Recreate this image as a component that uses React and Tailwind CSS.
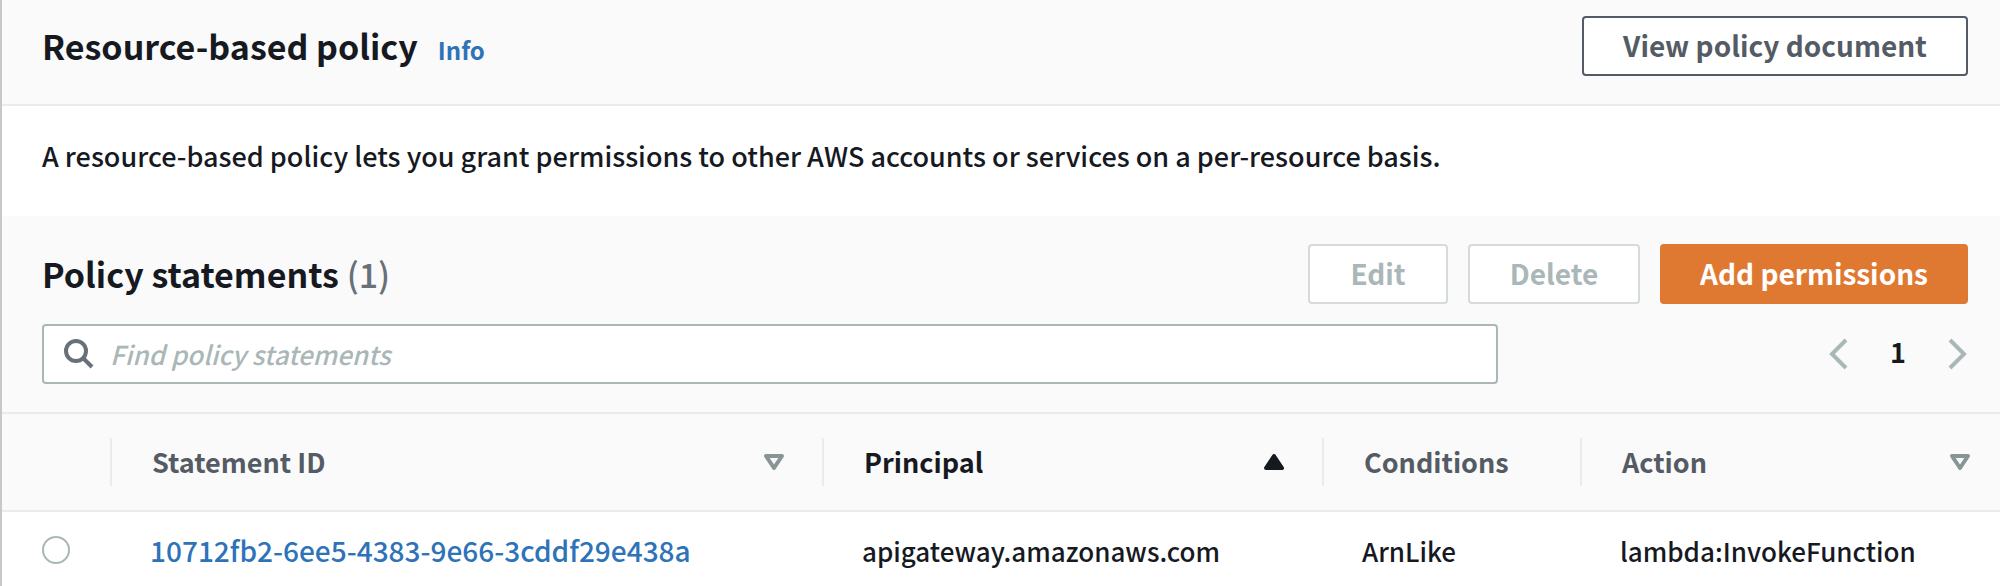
import React from 'react';

const columns = [
    { key: 'id', label: 'Statement ID', sort: 'none' },
    { key: 'principal', label: 'Principal', sort: 'asc' },
    { key: 'conditions', label: 'Conditions' },
    { key: 'action', label: 'Action', sort: 'none' },
];

const statements = [
    {
        id: '10712fb2-6ee5-4383-9e66-3cddf29e438a',
        principal: 'apigateway.amazonaws.com',
        conditions: 'ArnLike',
        action: 'lambda:InvokeFunction',
    },
];

const buttonStyles = {
    normal: 'bg-white border-[#545b64] text-[#545b64]',
    disabled: 'bg-white border-[#d5dbdb] text-[#aab7b8]',
    primary: 'bg-[#df7932] border-[#df7932] text-white',
};

const Button = ({ variant = 'normal', className = '', children }) => (
    <button
        type="button"
        disabled={variant === 'disabled'}
        className={`h-15 pb-0.5 rounded-sm border-2 text-[28px] font-bold whitespace-nowrap ${buttonStyles[variant]} ${className}`}
    >
        {children}
    </button>
);

const SearchIcon = () => (
    <svg className="w-8 h-8 shrink-0" viewBox="0 0 32 32" fill="none" stroke="#687078" strokeWidth="4">
        <circle cx="14" cy="13" r="10" />
        <path d="M21 20l9 9" />
    </svg>
);

const Chevron = ({ d }) => (
    <svg className="w-5 h-8" viewBox="0 0 20 32" fill="none" stroke="#aab7b8" strokeWidth="4">
        <path d={d} />
    </svg>
);

const SortIcon = ({ sort }) => (
    <svg className="w-6 h-5 shrink-0" viewBox="0 0 24 20" strokeLinejoin="round">
        {sort === 'asc' ? (
            <path d="M12 4L20 16H4Z" fill="#16191f" stroke="#16191f" strokeWidth="4" />
        ) : (
            <path d="M4 4H20L12 16Z" fill="none" stroke="#879596" strokeWidth="4" />
        )}
    </svg>
);

const App = () => {
    return (
        <main className="min-h-screen border-l-2 border-[#c5c9c9] bg-white text-[27px] leading-9 font-medium text-[#16191f] font-['Noto_Sans_CJK_SC','Noto_Sans',sans-serif]">
            <header className="flex items-start justify-between bg-[#fafafa] border-b-2 border-[#ebebeb] pl-10 pr-8 pt-4 pb-7">
                <div className="flex items-baseline gap-5 pt-2.5">
                    <h1 className="text-[34px] leading-10 font-bold">Resource-based policy</h1>
                    <a href="#info" className="text-2xl font-bold text-[#2e73b8]">Info</a>
                </div>
                <Button className="w-[386px]">View policy document</Button>
            </header>

            <p className="pl-10 pr-8 pt-8 pb-[42px]">
                A resource-based policy lets you grant permissions to other AWS accounts or services on a per-resource basis.
            </p>

            <section className="bg-[#fafafa] pl-10 pr-8 pt-7 pb-7">
                <div className="flex items-start justify-between">
                    <h2 className="pt-2.5 text-[34px] leading-10 font-bold">
                        Policy statements <span className="font-medium text-[#687078]">(1)</span>
                    </h2>
                    <div className="flex gap-5">
                        <Button variant="disabled" className="w-35">Edit</Button>
                        <Button variant="disabled" className="w-43">Delete</Button>
                        <Button variant="primary" className="w-77">Add permissions</Button>
                    </div>
                </div>
                <div className="flex items-center justify-between mt-5">
                    <label className="flex items-center gap-4 w-[1456px] max-w-3/4 xl:max-w-4/5 h-15 pl-4.5 pr-4 bg-white border-2 border-[#aab7b8] rounded-sm">
                        <SearchIcon />
                        <input
                            type="text"
                            aria-label="Find policy statements"
                            placeholder="Find policy statements"
                            className="flex-1 min-w-0 text-[26px] outline-none placeholder:italic placeholder:text-[#aab7b8]"
                        />
                    </label>
                    <nav className="flex items-center" aria-label="Pagination">
                        <button type="button" aria-label="Previous page" disabled>
                            <Chevron d="M18 2L4 16L18 30" />
                        </button>
                        <button type="button" className="w-25 pb-1 font-bold">1</button>
                        <button type="button" aria-label="Next page" disabled>
                            <Chevron d="M2 2L16 16L2 30" />
                        </button>
                    </nav>
                </div>
            </section>

            <table className="w-full table-fixed text-left text-[26px]">
                <colgroup>
                    <col className="w-[108px]" />
                    <col className="w-[712px]" />
                    <col className="w-[500px]" />
                    <col className="w-[258px]" />
                    <col />
                </colgroup>
                <thead>
                    <tr className="bg-[#fafafa] border-y-2 border-[#ebebeb] text-[27px]">
                        <td />
                        {columns.map((col) => (
                            <th key={col.key} className="py-6 font-bold">
                                <div className={`flex items-center justify-between h-12 pl-10 border-l-2 border-[#ebebeb] ${col.key === 'action' ? 'pr-7' : 'pr-9'} ${col.sort === 'asc' ? 'text-[#16191f]' : 'text-[#545b64]'}`}>
                                    {col.label}
                                    {col.sort && <SortIcon sort={col.sort} />}
                                </div>
                            </th>
                        ))}
                    </tr>
                </thead>
                <tbody>
                    {statements.map((row) => (
                        <tr key={row.id}>
                            <td className="pt-1 pl-10">
                                <input
                                    type="radio"
                                    name="statement"
                                    aria-label={row.id}
                                    className="block appearance-none w-7 h-7 rounded-full border-2 border-[#aab7b8] bg-white"
                                />
                            </td>
                            <td className="pt-5 pb-3.5 pl-10">
                                <a href="#statement" className="text-[28px] text-[#2e73b8]">{row.id}</a>
                            </td>
                            <td className="pt-5 pb-3.5 pl-10">{row.principal}</td>
                            <td className="pt-5 pb-3.5 pl-10">{row.conditions}</td>
                            <td className="pt-5 pb-3.5 pl-10">{row.action}</td>
                        </tr>
                    ))}
                </tbody>
            </table>
        </main>
    );
};

export default App;
